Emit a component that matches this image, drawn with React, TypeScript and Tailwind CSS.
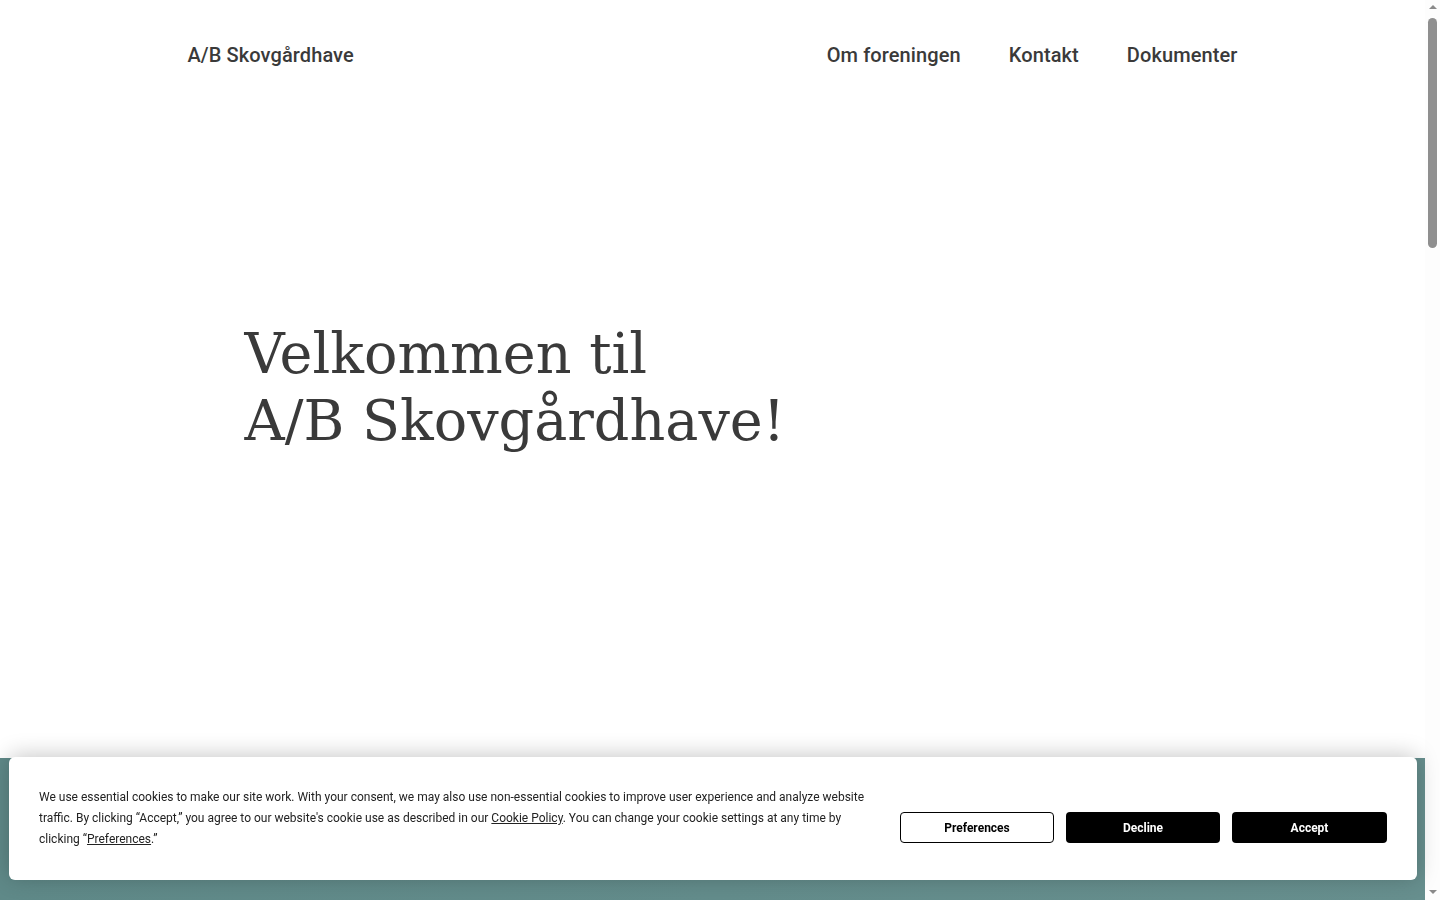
export default function App() {
  return (
    <div className="min-h-screen bg-white font-['Roboto',sans-serif] text-[#3a3a3a]">
      <div className="w-[1425px]">
        {/* top header */}
        <header className="mx-auto flex h-[110px] w-[1050px] items-center justify-between">
          <a href="#" className="text-[20px] font-medium tracking-[0.1px] text-[#3a3a3a]">
            A/B Skovgårdhave
          </a>
          <nav className="flex items-center gap-12 text-[20px] font-medium tracking-[0.1px] text-[#3a3a3a]">
            <a href="#">Om foreningen</a>
            <a href="#">Kontakt</a>
            <a href="#">Dokumenter</a>
          </nav>
        </header>

        {/* hero */}
        <section className="mx-auto flex h-[648px] w-[1050px] items-start px-[57px] pt-[210px]">
          <h1 className="font-['DejaVu_Serif',serif] text-[55.6px] leading-[67px] font-normal text-[#3a3a3a]">
            Velkommen til
            <br />
            A/B Skovgårdhave!
          </h1>
        </section>

        {/* teal content band */}
        <section className="h-[1700px] bg-gradient-to-r from-[#5f8988] to-[#678f8e]" />
        <section className="h-[800px] bg-white" />
      </div>

      {/* page scrollbar */}
      <div className="fixed top-0 right-0 flex h-screen w-[15px] flex-col items-center bg-[#fdfdfd]">
        <div className="mt-[5px] h-0 w-0 border-x-[4px] border-b-[4px] border-x-transparent border-b-[#8a8a8a]" />
        <div className="mt-[9px] h-[230px] w-[9px] rounded-full bg-[#8f8f8f]" />
        <div className="flex-1" />
        <div className="mb-[6px] h-0 w-0 border-x-[4px] border-t-[4px] border-x-transparent border-t-[#8a8a8a]" />
      </div>

      {/* cookie consent bar */}
      <div className="fixed right-[23px] bottom-[20px] left-[9px] flex items-start justify-between rounded-md bg-white px-[30px] py-[30px] shadow-[0_-2px_22px_rgba(0,0,0,0.22)]">
        <p className="w-[840px] text-[12px] leading-[21px] text-[#222]">
          We use essential cookies to make our site work. With your consent, we may also use non-essential cookies to
          improve user experience and analyze website traffic. By clicking “Accept,” you agree to our website's cookie
          use as described in our{" "}
          <a href="#" className="underline">
            Cookie Policy
          </a>
          . You can change your cookie settings at any time by clicking “
          <a href="#" className="underline">
            Preferences
          </a>
          .”
        </p>
        <div className="mt-[25px] flex gap-3">
          <button className="h-[31px] w-[154px] rounded-[4px] border border-black bg-white text-[12px] font-bold text-black">
            Preferences
          </button>
          <button className="h-[31px] w-[154px] rounded-[4px] bg-black text-[12px] font-bold text-white">
            Decline
          </button>
          <button className="h-[31px] w-[155px] rounded-[4px] bg-black text-[12px] font-bold text-white">
            Accept
          </button>
        </div>
      </div>
    </div>
  );
}
